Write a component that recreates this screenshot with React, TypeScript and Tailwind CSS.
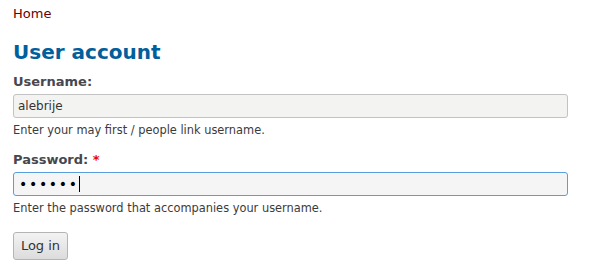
import React from "react";

export default function App() {
  return (
    <div
      className="min-h-[262px] w-[599px] bg-white pl-[13px] pt-[5px] text-[#333]"
      style={{ fontFamily: '"DejaVu Sans", sans-serif' }}
    >
      <a className="block text-[13px] leading-[18px] text-[#6c0000]">Home</a>
      <h1 className="mt-[17px] text-[20px] font-bold leading-[24px] text-[#00609c]">
        User account
      </h1>
      <div className="mt-[9px]">
        <label className="block text-[13px] font-bold leading-[18px] text-[#47474f]">
          Username:
        </label>
        <div className="mt-[3px] flex h-[24px] w-[555px] items-center rounded-[3px] border border-[#c2c2c2] bg-[#f3f3f1] px-[4px] text-[12px] text-[#333]">
          alebrije
        </div>
        <div className="mt-[5px] text-[11.4px] leading-[14px] text-[#3b3b3b]">
          Enter your may first / people link username.
        </div>
      </div>
      <div className="mt-[14px]">
        <label className="block text-[13px] font-bold leading-[18px] text-[#47474f]">
          Password: <span className="text-[#e00]">*</span>
        </label>
        <div className="mt-[3px] flex h-[24px] w-[555px] items-center rounded-[3px] border border-[#5b9ee0] bg-[#f5f5f5] pl-[5px] text-[14px] text-black">
          <span className="tracking-[1.7px]">••••••</span>
          <span className="inline-block h-[16px] w-[1px] bg-black" />
        </div>
        <div className="mt-[5px] text-[11.4px] leading-[14px] text-[#3b3b3b]">
          Enter the password that accompanies your username.
        </div>
      </div>
      <button className="mt-[17px] h-[28px] w-[55px] rounded-[3px] border border-[#b4b4b4] bg-gradient-to-b from-[#f3f3f3] to-[#dcdcdc] text-[13px] text-[#333]">
        Log in
      </button>
    </div>
  );
}
